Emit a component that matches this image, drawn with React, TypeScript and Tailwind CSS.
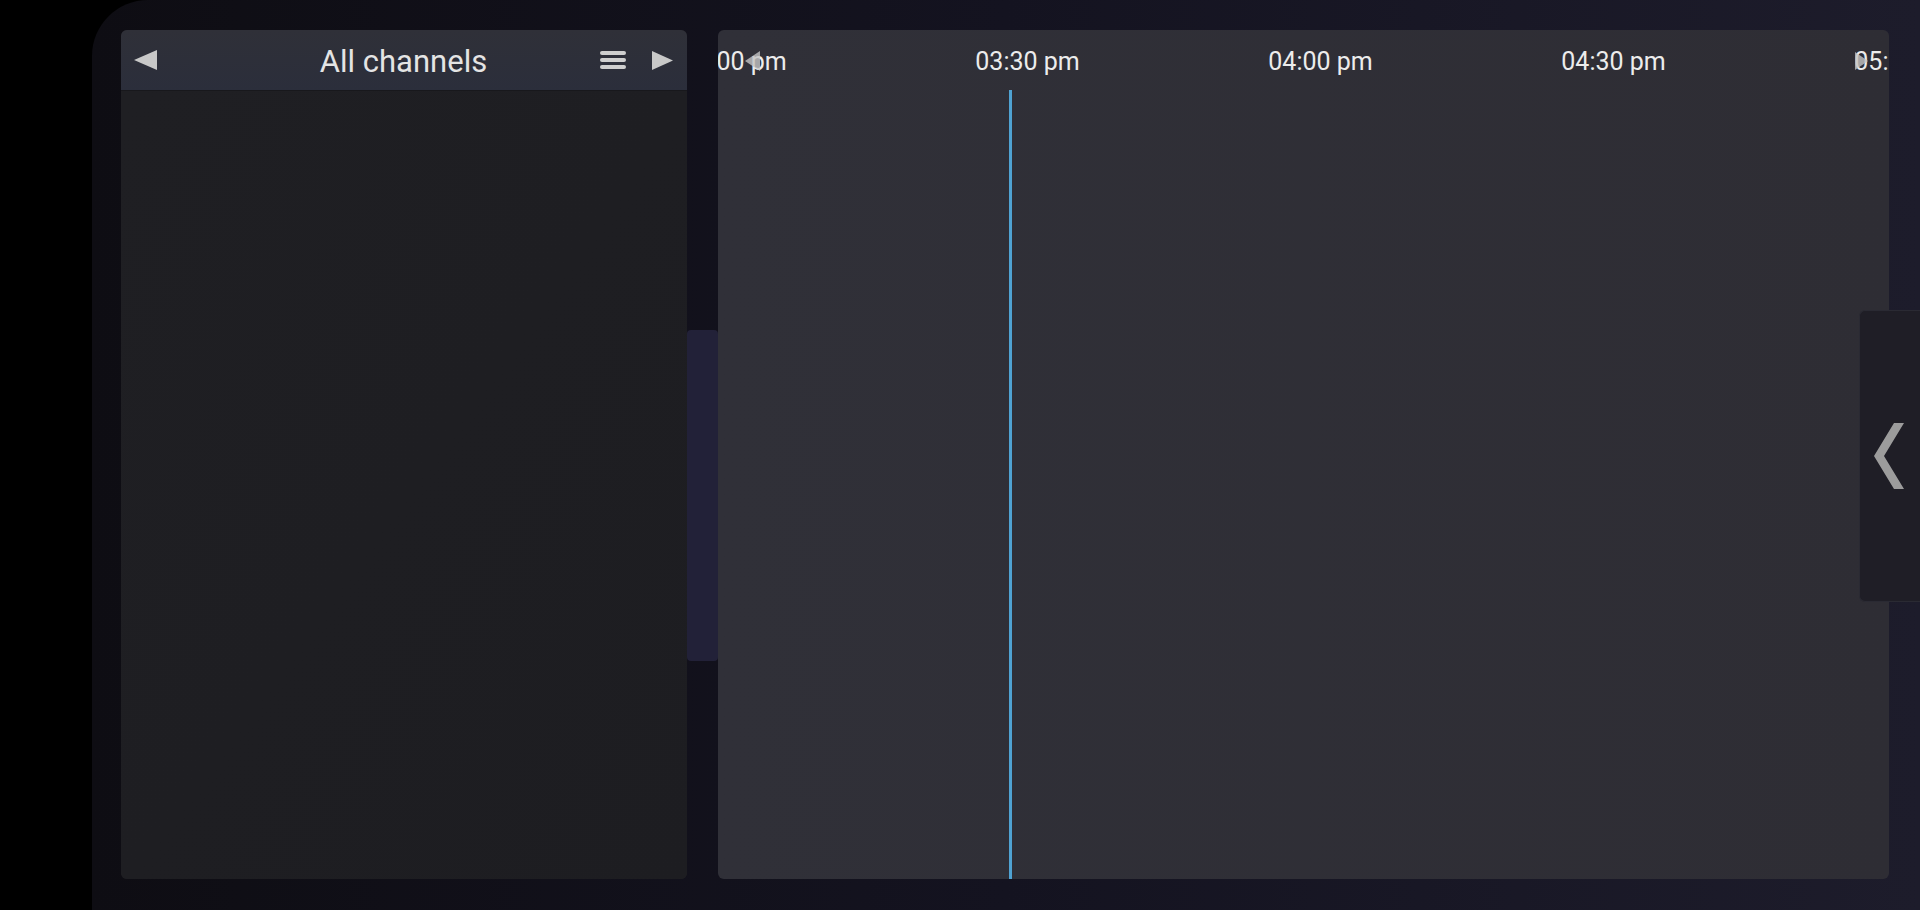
import React from "react";

const times = ["03:00 pm", "03:30 pm", "04:00 pm", "04:30 pm", "05:00 pm"];

function Tri({ dir, className }: { dir: "left" | "right"; className?: string }) {
  return (
    <svg viewBox="0 0 20 20" preserveAspectRatio="none" className={className}>
      {dir === "left" ? <polygon points="20,0 20,20 0,10" fill="currentColor" /> : <polygon points="0,0 0,20 20,10" fill="currentColor" />}
    </svg>
  );
}

export default function App() {
  return (
    <div className="w-[1920px] h-[910px] bg-black overflow-hidden" style={{ fontFamily: "Roboto, 'Noto Sans', sans-serif" }}>
      <div className="ml-[92px] h-[910px] rounded-tl-[56px] bg-gradient-to-r from-[#0e0d13] via-[#141320] to-[#1d1c2b] pt-[30px] pl-[29px] flex relative">
        {/* channel list */}
        <div className="w-[566px] h-[849px] rounded-[6px] bg-[#1e1e22] flex flex-col overflow-hidden shrink-0">
          <div className="h-[61px] bg-gradient-to-b from-[#2f3038] to-[#2b2e3b] border-b border-[#18181c] flex items-center pl-[13px] pr-[14px]">
            <Tri dir="left" className="w-[23px] h-[20px] text-[#c8c8c8]" />
            <div className="flex-1 text-center text-[31px] text-[#e4e4e4] leading-none pl-[50px] pt-[2px]">All channels</div>
            <div className="flex flex-col gap-[3px] w-[26px] mr-[26px]">
              <div className="h-[4px] rounded-full bg-[#cfcfcf]" />
              <div className="h-[4px] rounded-full bg-[#cfcfcf]" />
              <div className="h-[4px] rounded-full bg-[#cfcfcf]" />
            </div>
            <Tri dir="right" className="w-[21px] h-[19px] text-[#c8c8c8]" />
          </div>
          <div className="flex-1 bg-gradient-to-br from-[#1f1f23] to-[#1d1d21]" />
        </div>

        {/* gap with background blob */}
        <div className="w-[31px] h-[849px] flex flex-col shrink-0">
          <div className="mt-[300px] h-[331px] bg-[#222138] rounded-[4px]" />
        </div>

        {/* timeline */}
        <div className="w-[1171px] h-[849px] rounded-[6px] bg-gradient-to-r from-[#303038] to-[#2e2d34] relative overflow-hidden shrink-0">
          <div className="h-[60px] flex items-center pt-[3px]">
            <div className="flex ml-[-130px]">
              {times.map((t) => (
                <div key={t} className="w-[293px] shrink-0 text-center text-[25px] text-[#ececec] leading-none">{t}</div>
              ))}
            </div>
          </div>
          <div className="absolute left-[27px] top-[21px]">
            <Tri dir="left" className="w-[15px] h-[20px] text-[#c4c4c4]/80" />
          </div>
          <div className="absolute left-[1137px] top-[22px]">
            <Tri dir="right" className="w-[13px] h-[18px] text-[#c4c4c4]/80" />
          </div>
          <div className="absolute left-[291px] top-[60px] bottom-0 w-[3px] bg-[#4fa2d2]" />
        </div>

        {/* side tab */}
        <div className="absolute left-[1767px] top-[310px] w-[61px] h-[292px] rounded-l-[6px] bg-[#1f1e26] border-l border-t border-b border-[#2a2a33] flex items-center justify-center pr-[2px]">
          <svg viewBox="0 0 30 66" className="w-[30px] h-[66px]">
            <polygon points="20,0 30,0 10,33 30,66 20,66 0,33" fill="#9c9c9c" />
          </svg>
        </div>
      </div>
    </div>
  );
}
